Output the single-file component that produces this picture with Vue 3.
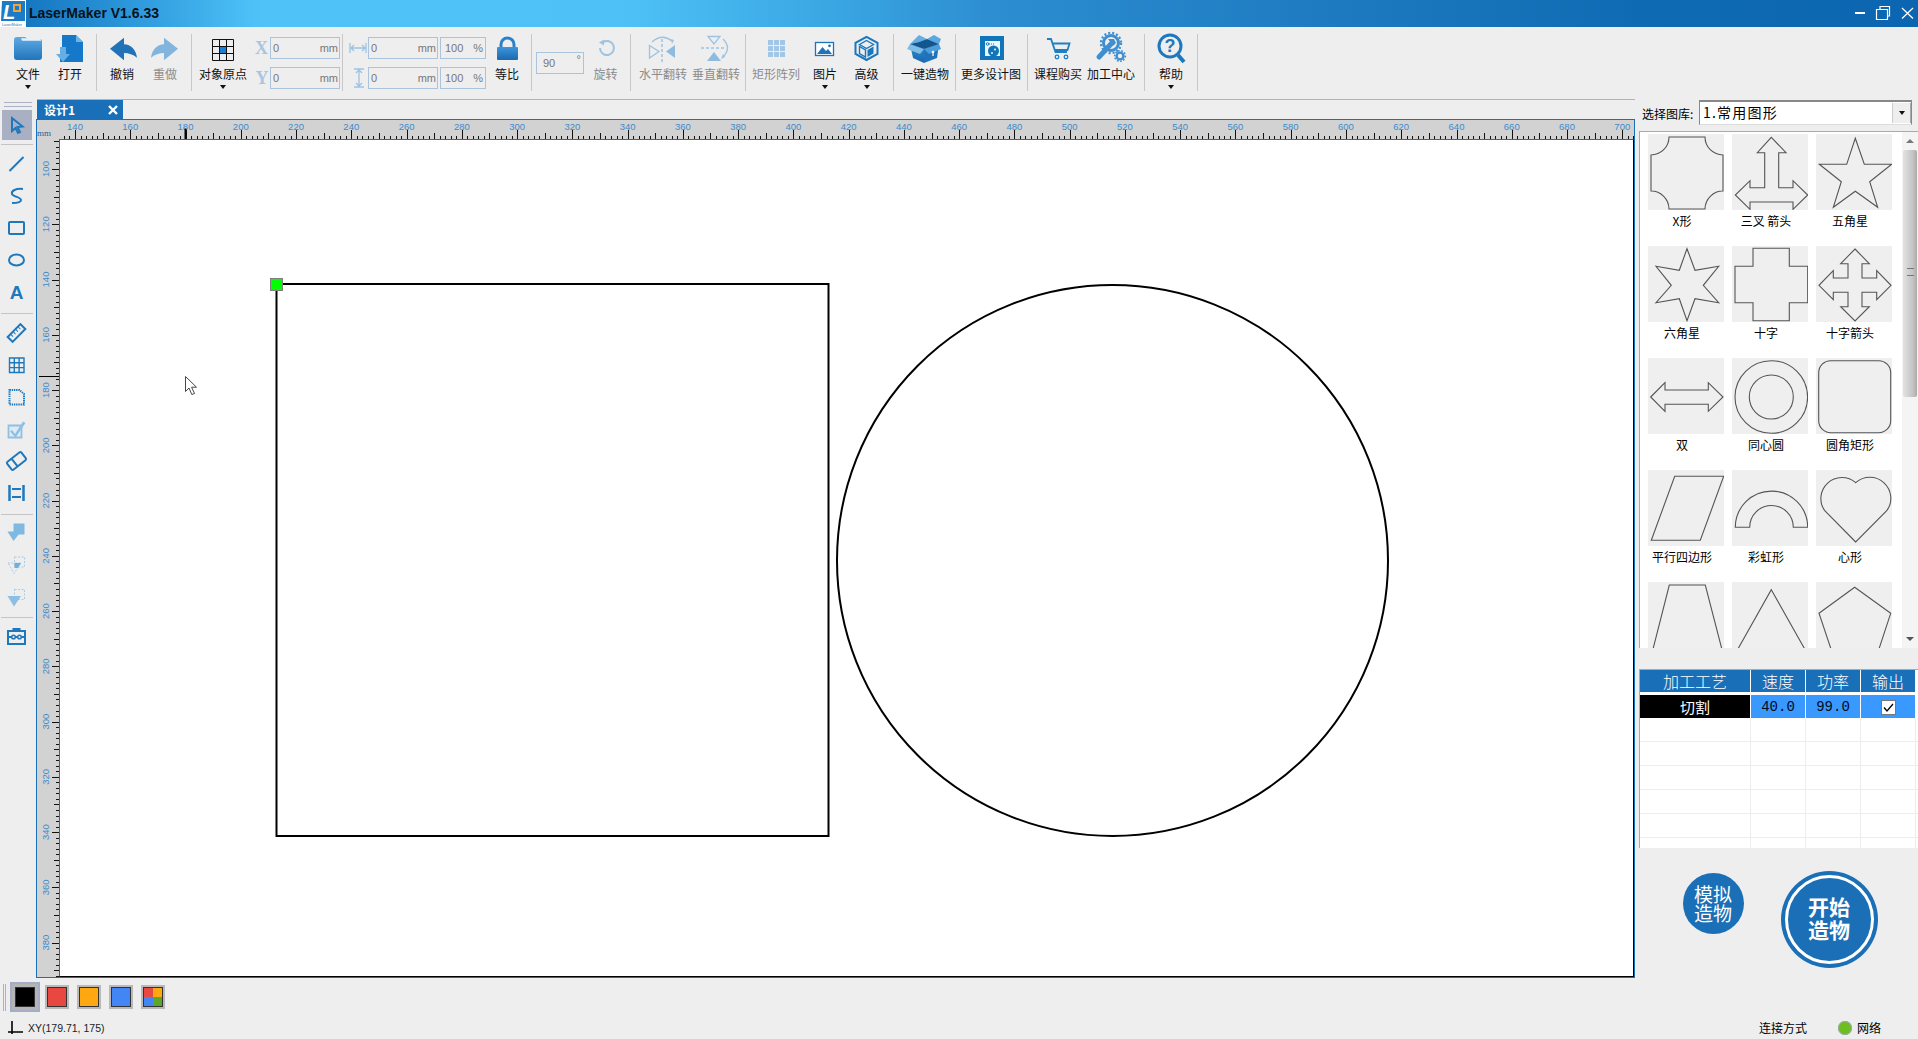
<script setup>
const L = '#9cc3e3'
const box = `<defs><linearGradient id="bx" x1="0" y1="0" x2="0" y2="1"><stop offset="0" stop-color="#2f8fd4"/><stop offset="1" stop-color="#1a66ab"/></linearGradient></defs>
<path d="M3 8 L17 13 V27 L6 22Z" fill="url(#bx)"/><path d="M17 13 L32 8 L30 22 L17 27Z" fill="#2173b9"/><path d="M3 8 L12 -1 L20 3 L12 6Z" fill="#64aee2"/><path d="M3 8 L0 13 L13 18 L17 13Z" fill="#7dbde8"/><path d="M17 13 L32 8 L34 13 L22 18Z" fill="#4c9edb"/><path d="M20 3 L27 -1 L34 3 L32 8 Z" fill="#5aa8e0"/><path d="M12 6 L20 3 L32 8 L17 13 L3 8Z" fill="#12558f"/><circle cx="26" cy="16" r="1.3" fill="#fff"/><rect x="25.4" y="16" width="1.2" height="4" fill="#fff"/>`

const icons = {
  folder: `<defs><linearGradient id="fo" x1="0" y1="0" x2="0" y2="1"><stop offset="0" stop-color="#5eaae4"/><stop offset="1" stop-color="#2275bb"/></linearGradient></defs><path d="M4 4q0-3 3-3h8l3 2h12q2 0 2 3v15q0 3-3 3H7q-3 0-3-3z" fill="url(#fo)"/><path d="M11 2.2h10l1 .8h8.5l.7 1.8H12z" fill="#e6f1fa"/>`,
  open: `<path d="M10 -1H24L31 6V26H8V14H10Z" fill="#1578c9"/><path d="M24 -1L31 6H24Z" fill="#6cb3e8"/><path d="M8 11h6v7h4l-7 8-7-8h4z" fill="#66aee4"/>`,
  undo: `<path d="M6 12.7L20 1.7V8.3C27 8.3 32 14 33 21.7C29 18.5 25 17 20 17V24.3Z" fill="#2272b8"/>`,
  redo: `<path d="M31 12.7L17 1.7V8.3C10 8.3 5 14 4 21.7C8 18.5 12 17 17 17V24.3Z" fill="#82b5de"/>`,
  origin: `<rect x="14.5" y="10.5" width="7" height="7" fill="#1a7fd6"/><path d="M7.5 3.5h21v21h-21zM14.5 3.5v21M21.5 3.5v21M7.5 10.5h21M7.5 17.5h21" fill="none" stroke="#111" stroke-width="1"/>`,
  lock: `<defs><linearGradient id="lk" x1="0" y1="0" x2="0" y2="1"><stop offset="0" stop-color="#3d95dc"/><stop offset="1" stop-color="#1c68ae"/></linearGradient></defs><path d="M12 12V8.5a6.5 6.5 0 0 1 13 0V12" fill="none" stroke="#2d80c8" stroke-width="3"/><rect x="8" y="11" width="21" height="13" rx="1" fill="url(#lk)"/>`,
  rotate: `<path d="M15 6.3A7 7 0 1 1 12 12" fill="none" stroke="${L}" stroke-width="2"/><path d="M11 6.5l5-3v6z" fill="${L}"/>`,
  fliph: `<path d="M17 3V26" stroke="${L}" stroke-width="1.5" stroke-dasharray="3 2"/><path d="M4.5 9.5L14 15.5L4.5 22Z" fill="none" stroke="${L}" stroke-width="1.3"/><path d="M30 9L21 15.5L30 22Z" fill="#8fbbdf"/><path d="M7 6Q17 -3 27 5" fill="none" stroke="${L}" stroke-width="1.3"/><path d="M27 8l-1-5 3 1z" fill="${L}"/>`,
  flipv: `<path d="M10 .5H22L16 8Z" fill="none" stroke="${L}" stroke-width="1.3"/><path d="M3 12H27" stroke="${L}" stroke-width="1.5" stroke-dasharray="3 2"/><path d="M9 25L16 16L23 25Z" fill="#8fbbdf"/><path d="M25 3Q34 12 25 21" fill="none" stroke="${L}" stroke-width="1.3"/><path d="M23 23l2-5 2 3z" fill="${L}"/>`,
  matrix: `<path d="M10 4h5v5h-5zM16 4h5v5h-5zM22 4h5v5h-5zM10 10h5v5h-5zM16 10h5v5h-5zM22 10h5v5h-5zM10 16h5v5h-5zM16 16h5v5h-5zM22 16h5v5h-5z" fill="#a2c6e4"/>`,
  image: `<rect x="8.5" y="6.5" width="18" height="13" fill="#fff" stroke="#1e73b9" stroke-width="1.3"/><path d="M10 18L15.5 11L19 15L21 13L25 18Z" fill="#2272b8"/><circle cx="22.5" cy="9.8" r="1.4" fill="#2272b8"/>`,
  adv: `<path d="M17.5.8L28.5 6.8V18L17.5 24L6.5 18V6.8Z" fill="none" stroke="#1a77bd" stroke-width="2"/><path d="M10.5 8.5L17.5 4.5L24.5 8.5L17.5 12.5Z" fill="none" stroke="#1a77bd" stroke-width="1.4"/><path d="M10.5 10.5L16.5 14V21L10.5 17.5Z" fill="none" stroke="#1a77bd" stroke-width="1.4"/><path d="M18.5 14L24.5 10.5V17.5L18.5 21Z" fill="#1a77bd"/>`,
  box,
  more: `<rect x="7" y="0" width="24" height="24" fill="#0f76bc"/><rect x="12" y="5" width="15" height="15" fill="#eef5fa"/><circle cx="20.5" cy="15" r="5.5" fill="#0f76bc"/><circle cx="14.5" cy="8" r="1.3" fill="none" stroke="#0f76bc"/><path d="M16 8h5" stroke="#0f76bc" stroke-dasharray="1 1"/><circle cx="22" cy="13.5" r=".9" fill="#fff"/><circle cx="19" cy="17" r=".9" fill="#fff"/>`,
  cart: `<path d="M7 3h4l4.5 13H27M12.5 7.5H29.5L27.5 14H15" fill="none" stroke="#1f7fc4" stroke-width="1.8"/><circle cx="17" cy="21" r="1.8" fill="none" stroke="#1f7fc4" stroke-width="1.3"/><circle cx="26" cy="21" r="1.8" fill="none" stroke="#1f7fc4" stroke-width="1.3"/>`,
  center: `<circle cx="18" cy="7" r="7.5" fill="none" stroke="#3f8fd0" stroke-width="3"/><circle cx="18" cy="7" r="10" fill="none" stroke="#3f8fd0" stroke-width="2.4" stroke-dasharray="2 2"/><path d="M18 8L6 21" stroke="#3f8fd0" stroke-width="5" stroke-linecap="round"/><path d="M15 3l6 0 2 4-3 3z" fill="#3f8fd0"/><circle cx="27" cy="20" r="3.4" fill="none" stroke="#3f8fd0" stroke-width="2.4"/><circle cx="27" cy="20" r="5.3" fill="none" stroke="#3f8fd0" stroke-width="1.6" stroke-dasharray="1.6 1.6"/>`,
  help: `<circle cx="17" cy="10" r="11" fill="none" stroke="#1d78bf" stroke-width="3"/><path d="M25 19L31 26" stroke="#1d78bf" stroke-width="4"/><text x="17" y="16" text-anchor="middle" font-size="18" font-weight="700" font-family="Liberation Sans" fill="#1d78bf">?</text>`,
}

const t = (label, icon, w, extra = {}) => ({ type: 'tool', label, icon: icons[icon], w, ...extra })
const s = (ml, mr) => ({ type: 'sep', ml, mr })
const toolbar = [
  t('文件', 'folder', 44, { arrow: true }), t('打开', 'open', 40), s(6, 4),
  t('撤销', 'undo', 42), t('重做', 'redo', 44, { dim: true }), s(4, 1),
  t('对象原点', 'origin', 60, { arrow: true }),
  { type: 'coordA' }, s(2, 2), { type: 'coordB' },
  t('等比', 'lock', 42), s(3, 4), { type: 'angle' },
  t('旋转', 'rotate', 43, { dim: true }), s(3, 3),
  t('水平翻转', 'fliph', 58, { dim: true }), t('垂直翻转', 'flipv', 48, { dim: true }), s(5, 2),
  t('矩形阵列', 'matrix', 56, { dim: true }), t('图片', 'image', 42, { arrow: true }), t('高级', 'adv', 41, { arrow: true }), s(6, 3),
  t('一键造物', 'box', 56), s(2, 0), t('更多设计图', 'more', 70), s(1, 2),
  t('课程购买', 'cart', 56), t('加工中心', 'center', 50), s(8, 0),
  t('帮助', 'help', 52, { arrow: true }), s(0, 0),
]

const C = 'fill="none" stroke="#1f77bc" stroke-width="2"'
const leftGroups = [
  [
    `<path d="M7 5V18L10.5 15L13 20L15 19L12.5 14L17.5 13.5Z" ${C}/>`,
  ],
  [
    `<path d="M5.5 19L19.5 5" ${C}/>`,
    `<path d="M19 5C12 4 7 7 8 10C9 13 17 13 17 16C17 19 12 19 8 19" ${C}/>`,
    `<rect x="5" y="6" width="15" height="12" rx="1" ${C}/>`,
    `<ellipse cx="12.5" cy="12" rx="7.5" ry="5.5" ${C}/>`,
    `<text x="12.5" y="19" text-anchor="middle" font-family="Liberation Sans" font-weight="700" font-size="19" fill="#1f77bc">A</text>`,
  ],
  [
    `<g transform="rotate(-45 12.5 12)"><rect x="3.5" y="8.5" width="18" height="7" ${C}/><path d="M7.5 9v3M11 9v3M14.5 9v3M18 9v3" stroke="#1f77bc"/></g>`,
    `<path d="M5.5 5h14.5v14.5H5.5zM10.3 5v14.5M15.1 5v14.5M5.5 9.8h14.5M5.5 14.6h14.5" fill="none" stroke="#1f77bc" stroke-width="1.4"/>`,
    `<path d="M5.5 5h10l4.5 4v10.5H5.5z" fill="none" stroke="#1f77bc" stroke-width="2" stroke-dasharray="1.4 .8"/>`,
    `<path d="M4.5 8.5h13v12h-13z" fill="#dcebf6" stroke="#8fc0e4" stroke-width="1.8"/><path d="M8 13l3 4 8-12.500 2.500 1.500-10 14.500-5.500-6z" fill="#8fc0e4"/>`,
    `<g transform="rotate(-38 12.500 12)"><rect x="3.500" y="7" width="18" height="10" rx="1.500" ${C}/><path d="M10 7v10" ${C}/></g>`,
    `<path d="M5.500 4V20M19.500 4V20" stroke="#1f77bc" stroke-width="2.500"/><path d="M8 8h9M8 16h9" stroke="#1f77bc" stroke-width="2"/>`,
  ],
  [
    `<rect x="9.500" y="3.500" width="11" height="11" fill="#7fb8e0"/><path d="M3.500 11.500H17L9.500 21Z" fill="#7fb8e0"/>`,
    `<path d="M10.500 4h10v10h-10z" fill="none" stroke="#a8cbe6" stroke-dasharray="2 1.500"/><path d="M4 10H17L10 20.500Z" fill="none" stroke="#a8cbe6" stroke-dasharray="2 1.500"/><path d="M10.500 10H17L13.700 15H10.500Z" fill="#6fafdc"/>`,
    `<path d="M10.500 3.500h10v10h-10z" fill="none" stroke="#a8cbe6" stroke-dasharray="2 1.500"/><path d="M3.500 10H17L10 20.500Z" fill="#8cbfe3"/>`,
  ],
  [
    `<path d="M4 7h17v13H4zM9.500 7V5h6v2" ${C}/><path d="M4 13h4M17 13h4M11.500 13h2" ${C}/><circle cx="9.500" cy="13" r="1.800" fill="none" stroke="#1f77bc" stroke-width="1.500"/><circle cx="15.500" cy="13" r="1.800" fill="none" stroke="#1f77bc" stroke-width="1.500"/>`,
  ],
]

const SCALE = 2.763
const topTicks = []
for (let v = 136; v <= 704; v += 2) {
  topTicks.push({ x: Math.round(15 + (v - 140) * SCALE) + 0.5, h: v % 20 === 0 ? 9 : v % 10 === 0 ? 6 : 3 })
}
const topLabels = []
for (let v = 140; v <= 700; v += 20) topLabels.push({ v, x: 15 + (v - 140) * SCALE })
const leftTicks = []
for (let v = 90; v <= 392; v += 2) {
  leftTicks.push({ y: Math.round(30 + (v - 100) * SCALE) + 0.5, w: v % 20 === 0 ? 8 : v % 10 === 0 ? 6 : 4 })
}
const leftLabels = []
for (let v = 100; v <= 380; v += 20) leftLabels.push({ v, y: 30 + (v - 100) * SCALE })

const shapes = [
  { label: 'X形', svg: '<path d="M21 3H57A18 18 0 0 0 75 21V57A18 18 0 0 0 57 75H21A18 18 0 0 0 3 57V21A18 18 0 0 0 21 3Z"/>' },
  { label: '三叉 箭头', svg: '<path d="M39.300 3.300L54 18.700H46.700V53.700H61V46.700L75.700 61L61 75.300V68H18V75.300L3.300 61L18 46.700V53.700H32.700V18.700H25.300Z"/>' },
  { label: '五角星', svg: '<path d="M39.300 4.300L48.300 30.300H75.700L53.700 47.700L61.700 73.300L39.300 57.300L17.300 73.300L25.300 47.700L3.300 30.300H30.700Z"/>' },
  { label: '六角星', svg: '<path d="M39 2.700L47 24.300L70.700 20.300L55.300 39.300L70.700 56.700L47 52.700L39 74.700L31.300 52.700L8 56.700L23.300 39.300L8 20.300L31.300 24.300Z"/>' },
  { label: '十字', svg: '<path d="M21 2.300H57.300V20.300H75.700V56.700H57.300V74.700H21V56.700H3V20.300H21Z"/>' },
  { label: '十字箭头', svg: '<path d="M39 3L53.300 17.700H46V32H60.700V24.700L75 39.300L60.700 53.700V46.300H46V60.700H53.300L39 75L24.700 60.700H32V46.300H17.300V53.700L3 39.300L17.300 24.700V32H32V17.700H24.700Z"/>' },
  { label: '双', svg: '<path d="M2.700 39L17 24.700V32H60.300V24.700L75 39L60.300 53.300V46.300H17V53.300Z"/>' },
  { label: '同心圆', svg: '<circle cx="39.300" cy="39" r="36.300"/><circle cx="39.300" cy="39" r="22"/>' },
  { label: '圆角矩形', svg: '<rect x="2.700" y="2.700" width="72" height="72" rx="12"/>' },
  { label: '平行四边形', svg: '<path d="M26.700 6.300H75.700L52.300 70.300H3.300Z"/>' },
  { label: '彩虹形', svg: '<path d="M3.300 57.300A36.200 36.200 0 0 1 75.700 57.300H61.300A21.800 21.800 0 0 0 17.700 57.300Z"/>' },
  { label: '心形', svg: '<path d="M39.700 72L9 41A21 21 0 0 1 39.700 12.700A21 21 0 0 1 70.500 41Z"/>' },
  { label: '', svg: '<path d="M21.300 3H57.300L75.900 75H3Z"/>' },
  { label: '', svg: '<path d="M39.300 7.700L75.500 72H3.100Z"/>' },
  { label: '', svg: '<path d="M38.700 5.300L74.700 31.300L61 73H17L3 31.300Z"/>' },
]

const emptyRows = [1, 2, 3, 4, 5, 6]
const swatches = ['#e8483f', '#fda811', '#4285f4']
</script>

<template>
  <div class="app">
    <header class="title">
      <svg class="logo" width="26" height="27" viewBox="0 0 26 27">
        <rect width="26" height="27" fill="#fff" />
        <path d="M2 1H25V21H1Z" fill="#1b7bc6" />
        <rect x="13" y="4" width="8" height="8" fill="#f3a33a" />
        <rect x="15" y="6" width="4" height="4" fill="#1b7bc6" />
        <text x="3" y="19" font-family="Liberation Sans" font-weight="700" font-style="italic" font-size="20" fill="#fff">L</text>
        <text x="2" y="25.500" font-family="Liberation Sans" font-size="3.800" fill="#1b7bc6">LaserMaker</text>
      </svg>
      <span class="title-text">LaserMaker V1.6.33</span>
      <div class="win">
        <svg width="64" height="27" viewBox="0 0 64 27">
          <path d="M1 13H11" stroke="#fff" stroke-width="2" />
          <path d="M22.500 9.500H33.500V19.500H22.500ZM26 9V6.500H35.500V16H34" fill="none" stroke="#fff" stroke-width="1.200" />
          <path d="M48 8L59 18.500M59 8L48 18.500" stroke="#fff" stroke-width="1.200" />
        </svg>
      </div>
    </header>

    <nav class="toolbar">
      <template v-for="(item, i) in toolbar" :key="i">
        <div v-if="item.type === 'tool'" class="tool" :class="{ dim: item.dim }" :style="{ width: item.w + 'px' }">
          <svg class="tool-icon" width="36" height="30" viewBox="0 0 36 30" v-html="item.icon"></svg>
          <span class="tool-label">{{ item.label }}</span>
          <i v-if="item.arrow" class="tri"></i>
        </div>
        <div v-else-if="item.type === 'sep'" class="sep" :style="{ marginLeft: item.ml + 'px', marginRight: item.mr + 'px' }"></div>
        <div v-else-if="item.type === 'coordA'" class="coord coord-a">
          <div class="coord-row"><span class="axis">X</span><div class="inp w70"><span>0</span><span>mm</span></div></div>
          <div class="coord-row"><span class="axis axis-y">Y</span><div class="inp w70"><span>0</span><span>mm</span></div></div>
        </div>
        <div v-else-if="item.type === 'coordB'" class="coord coord-b">
          <div class="coord-row">
            <svg class="dim-icon" width="23" height="22" viewBox="0 0 23 22"><path d="M5 6v10M21 6v10M6 11h14M9 8l-3 3 3 3M17 8l3 3-3 3" fill="none" stroke="#9cc3e3" stroke-width="1.300" /></svg>
            <div class="inp w70"><span>0</span><span>mm</span></div>
            <div class="inp w46"><span>100</span><span>%</span></div>
          </div>
          <div class="coord-row">
            <svg class="dim-icon" width="23" height="22" viewBox="0 0 23 22"><path d="M9 2h10M9 20h10M14 3v16M11 6l3-3 3 3M11 16l3 3 3-3" fill="none" stroke="#9cc3e3" stroke-width="1.300" /></svg>
            <div class="inp w70"><span>0</span><span>mm</span></div>
            <div class="inp w46"><span>100</span><span>%</span></div>
          </div>
        </div>
        <div v-else class="angle-wrap"><div class="inp angle"><span>90</span><span class="deg">°</span></div></div>
      </template>
    </nav>

    <div class="body">
      <aside class="left">
        <div class="grip"></div>
        <template v-for="(group, gi) in leftGroups" :key="gi">
          <div v-if="gi" class="left-sep" :class="'sep' + gi"></div>
          <div
            v-for="(ic, ii) in group"
            :key="ii"
            class="left-btn"
            :class="{ selected: gi === 0, compact: gi === 3 && ii > 0 }"
          >
            <svg width="25" height="24" viewBox="0 0 25 24" v-html="ic"></svg>
          </div>
        </template>
      </aside>

      <section class="center">
        <div class="tabs">
          <div class="tab"><span>设计1</span><svg width="10" height="10" viewBox="0 0 10 10"><path d="M1 1L9 9M9 1L1 9" stroke="#fff" stroke-width="2.400" /></svg></div>
        </div>
        <div class="work">
          <div class="corner">mm</div>
          <svg class="ruler-top" width="1574" height="19" viewBox="0 0 1574 19">
            <text v-for="l in topLabels" :key="l.v" :x="l.x" y="10" text-anchor="middle" class="rtext">{{ l.v }}</text>
            <path v-for="(tk, k) in topTicks" :key="k" :d="`M${tk.x} 19V${19 - tk.h}`" stroke="#111" />
            <path d="M125.500 8.500V19" stroke="#000" stroke-width="2" />
          </svg>
          <svg class="ruler-left" width="23" height="838" viewBox="0 0 23 838">
            <text
              v-for="l in leftLabels"
              :key="l.v"
              :transform="`translate(11.500 ${l.y}) rotate(-90)`"
              text-anchor="middle"
              y="0"
              class="rtext"
            >{{ l.v }}</text>
            <path v-for="(tk, k) in leftTicks" :key="k" :d="`M23 ${tk.y}H${23 - tk.w}`" stroke="#111" />
            <path d="M2 237.500H23" stroke="#000" />
          </svg>
          <div class="canvas">
            <svg class="art" width="1574" height="837" viewBox="0 0 1574 837">
              <rect x="216.500" y="144" width="552" height="552" fill="none" stroke="#000" stroke-width="2" />
              <circle cx="1052.500" cy="420.500" r="275.500" fill="none" stroke="#000" stroke-width="2" />
              <rect x="210.500" y="138.500" width="12" height="12" fill="#00ff00" stroke="#7f7f7f" />
              <path d="M125.500 236.500V251.500L129 248L131.800 254.500L134.500 253.500L131.600 247.200H136.500Z" fill="#fff" stroke="#333" stroke-width=".900" />
            </svg>
          </div>
        </div>
      </section>

      <aside class="right">
        <div class="lib-row">
          <span class="lib-label">选择图库:</span>
          <div class="select"><span class="sel-text">1.常用图形</span><b class="sel-btn"><i class="tri"></i></b></div>
        </div>
        <div class="gallery">
          <div class="grid">
            <div v-for="(sh, si) in shapes" :key="si" class="cell">
              <svg class="thumb" width="76" height="76" viewBox="0 0 76 76" fill="none" stroke="#555" stroke-width="1.100" v-html="sh.svg"></svg>
              <span v-if="sh.label" class="cell-label">{{ sh.label }}</span>
            </div>
          </div>
          <div class="scroll">
            <i class="up"></i>
            <div class="thumbbar"><em></em></div>
            <i class="down"></i>
          </div>
        </div>
        <div class="table">
          <div class="t-head">
            <span class="c1">加工工艺</span><span class="c2">速度</span><span class="c2">功率</span><span class="c2">输出</span>
          </div>
          <div class="t-sel">
            <span class="c1 black">切割</span><span class="c2 num">40.0</span><span class="c2 num">99.0</span>
            <span class="c2"><i class="check"><svg width="11" height="11" viewBox="0 0 11 11"><path d="M1 5.500L4 9L10 2" fill="none" stroke="#000" stroke-width="1.300" /></svg></i></span>
          </div>
          <div v-for="r in emptyRows" :key="r" class="t-row">
            <span class="c1"></span><span class="c2"></span><span class="c2"></span><span class="c2"></span>
          </div>
        </div>
        <div class="actions">
          <div class="sim">模拟<br />造物</div>
          <div class="start"><div class="ring">开始<br />造物</div></div>
        </div>
      </aside>
    </div>

    <footer class="bottom">
      <div class="swatches">
        <div class="sw-grip"></div>
        <div class="sw-sel"><i class="sw-inner black-sw"></i></div>
        <div v-for="c in swatches" :key="c" class="sw"><i class="sw-inner" :style="{ background: c }"></i></div>
        <div class="sw"><i class="sw-inner multi"><u class="q1"></u><u class="q2"></u><u class="q3"></u><u class="q4"></u></i></div>
      </div>
      <div class="status">
        <svg width="16" height="16" viewBox="0 0 16 16"><path d="M4 1V14M0 12H15" stroke="#000" stroke-width="1.600" fill="none" /></svg>
        <span class="xy">XY(179.71, 175)</span>
        <span class="conn">连接方式</span>
        <i class="dot"></i>
        <span class="net">网络</span>
      </div>
    </footer>
  </div>
</template>

<style>
html, body { margin: 0; padding: 0; background: #eee; overflow: hidden; }
</style>

<style scoped>
.app {
  width: 1918px;
  height: 1039px;
  display: flex;
  flex-direction: column;
  background: #eeeeee;
  font-family: "Noto Sans CJK SC", "Liberation Sans", sans-serif;
  font-size: 12px;
  color: #000;
  overflow: hidden;
}
.title {
  height: 27px;
  flex: none;
  display: flex;
  align-items: center;
  background: linear-gradient(90deg, #0f6fb9 0, #2a94d8 120px, #4fc3f8 260px, #4ec2f7 620px, #3ba8e4 820px, #2c8dd0 1000px, #1f7cc2 1300px, #0e6bb3 1650px, #0c65b0 100%);
}
.logo { flex: none; }
.title-text {
  margin-left: 3px;
  padding-bottom: 2px;
  font: 700 14px "Liberation Sans", sans-serif;
  color: #06121c;
}
.win { margin-left: auto; display: flex; }
.toolbar {
  height: 72px;
  flex: none;
  display: flex;
  align-items: stretch;
  padding-left: 6px;
}
.tool {
  position: relative;
  display: flex;
  flex-direction: column;
  align-items: center;
  flex: none;
  padding-top: 9px;
  box-sizing: border-box;
}
.tool-icon { overflow: visible; flex: none; }
.tool-label {
  line-height: 16px;
  white-space: nowrap;
  font-size: 12px;
  color: #111;
}
.dim .tool-label { color: #8c8c8c; }
.tri {
  display: block;
  width: 0;
  height: 0;
  border-left: 3px solid transparent;
  border-right: 3px solid transparent;
  border-top: 4px solid #111;
}
.tool .tri { margin-top: 3px; }
.sep {
  width: 1px;
  flex: none;
  background: #c8c8c8;
  margin-top: 7px;
  margin-bottom: 8px;
}
.coord {
  display: flex;
  flex-direction: column;
  gap: 8px;
  padding-top: 10px;
  flex: none;
}
.coord-a { width: 87px; }
.coord-b { width: 141px; }
.coord-row { display: flex; height: 22px; align-items: center; }
.axis {
  width: 17px;
  flex: none;
  text-align: center;
  font: 700 18px "Liberation Serif", serif;
  color: #a9c6e0;
}
.axis-y { padding-left: 1px; box-sizing: border-box; }
.dim-icon { flex: none; }
.inp {
  box-sizing: border-box;
  height: 22px;
  flex: none;
  display: flex;
  justify-content: space-between;
  align-items: center;
  border: 1px solid #a9c4dc;
  padding: 0 1px 0 2px;
  font: 11px "Liberation Sans", sans-serif;
  color: #777;
}
.w70 { width: 70px; }
.w46 { width: 46px; margin-left: 2px; padding: 0 2px 0 4px; }
.angle-wrap { flex: none; width: 48px; padding-top: 25px; }
.angle { width: 48px; padding: 0 2px 0 6px; }
.deg { align-self: flex-start; }

.body { height: 879px; flex: none; display: flex; }
.left { width: 36px; flex: none; display: flex; flex-direction: column; align-items: stretch; padding-top: 3px; box-sizing: border-box; }
.grip { height: 3px; margin: 0 4px 3px; border-top: 1px solid #aab2c4; border-bottom: 1px solid #aab2c4; }
.left-btn { height: 32px; display: flex; align-items: center; justify-content: center; flex: none; padding-right: 3px; }
.left-btn.compact { height: 33px; }
.left-btn.selected { height: 30px; margin: 0 4px -1px 2px; padding-right: 0; background: #a9b0c3; }
.left-sep { height: 1px; flex: none; background: #c4c4c4; margin: 5px 3px 3px 1px; }
.left-sep.sep3 { margin-bottom: 1px; }
.left-sep.sep4 { margin-top: 3px; margin-bottom: 2px; }

.center { width: 1599px; flex: none; display: flex; flex-direction: column; }
.tabs { height: 20px; flex: none; box-sizing: border-box; border-top: 1px solid #b3b3b3; margin-left: 1px; }
.tab {
  width: 86px;
  height: 19px;
  box-sizing: border-box;
  padding: 0 5px 0 7px;
  display: flex;
  align-items: center;
  justify-content: space-between;
  background: #1a6fb9;
  color: #fff;
  font-size: 12px;
  font-weight: 700;
}
.work {
  flex: 1;
  min-height: 0;
  display: grid;
  grid-template-columns: 23px 1574px;
  grid-template-rows: 19px 838px;
  border: 1px solid #1a6fb9;
  background: #d2d2d2;
  box-sizing: border-box;
}
.corner {
  font: 9px "Liberation Serif", serif;
  color: #1f5f9a;
  display: flex;
  align-items: flex-end;
  padding: 0 0 1px 0;
}
.ruler-top { display: block; }
.ruler-left { display: block; }
.rtext { font: 9.500px "Liberation Sans", sans-serif; fill: #3b8bcd; }
.canvas {
  position: relative;
  background: #fff;
  border-left: 1px solid #1a6fb9;
  border-top: 1px solid #1a6fb9;
  border-right: 1px solid #000;
  border-bottom: 1px solid #000;
  box-sizing: border-box;
  margin-left: -1px;
}
.art { position: absolute; left: 0; top: 0; overflow: hidden; }

.right { width: 283px; flex: none; display: flex; flex-direction: column; padding-left: 4px; box-sizing: border-box; }
.lib-row { height: 32px; flex: none; display: flex; padding-left: 3px; }
.lib-label { width: 57px; flex: none; padding-top: 7px; line-height: 16px; font-size: 12px; }
.select {
  width: 213px;
  height: 25px;
  margin-top: 1px;
  box-sizing: border-box;
  background: #fff;
  border: 1px solid #888;
  border-top-width: 2px;
  border-bottom-color: #ddd;
  padding-left: 3px;
  display: flex;
  justify-content: space-between;
  align-items: center;
  font-size: 14px;
  letter-spacing: 1.200px;
  line-height: 20px;
}
.sel-text { margin-top: -3px; }
.sel-btn { width: 17px; height: 20px; background: #eee; display: flex; align-items: center; justify-content: center; border-left: 1px solid #ccc; border-right: 1px solid #aaa; }
.gallery {
  height: 517px;
  flex: none;
  display: flex;
  background: #fff;
  border-top: 1px solid #aaa;
  border-left: 1px solid #aaa;
  box-sizing: border-box;
  overflow: hidden;
}
.grid {
  width: 262px;
  flex: none;
  box-sizing: border-box;
  padding: 2px 0 0 8px;
  display: grid;
  grid-template-columns: repeat(3, 76px);
  grid-auto-rows: 112px;
  column-gap: 8px;
  overflow: hidden;
}
.cell { display: flex; flex-direction: column; align-items: center; }
.thumb { background: #efefef; flex: none; display: block; }
.cell-label { line-height: 22px; padding-right: 8px; font-size: 12px; white-space: nowrap; }
.scroll { flex: 1; display: flex; flex-direction: column; align-items: center; background: #f4f4f4; position: relative; }
.up, .down { width: 0; height: 0; border-left: 4px solid transparent; border-right: 4px solid transparent; position: absolute; }
.up { top: 7px; border-bottom: 4px solid #777; }
.down { bottom: 7px; border-top: 4px solid #555; }
.thumbbar {
  margin-top: 18px;
  width: 14px;
  height: 247px;
  background: linear-gradient(90deg, #e2e2e2, #c4c4c4 70%, #aaa);
  border-radius: 2px;
  display: flex;
  align-items: center;
  justify-content: center;
}
.thumbbar em { width: 7px; height: 6px; border-top: 1px solid #777; border-bottom: 1px solid #777; position: relative; top: -2px; }
.table {
  margin-top: 21px;
  width: 279px;
  height: 179px;
  flex: none;
  box-sizing: border-box;
  overflow: hidden;
  background: #fff;
  border-top: 1px solid #aaa;
  border-left: 1px solid #aaa;
}
.t-head, .t-sel, .t-row { display: flex; }
.c1 { width: 110px; flex: none; border-right: 1px solid transparent; }
.c2 { width: 54px; flex: none; border-right: 1px solid transparent; }
.t-head span, .t-sel span { text-align: center; display: block; }
.t-head { height: 22px; margin-bottom: 3px; color: #fff; font-size: 16px; line-height: 22px; font-weight: 300; }
.t-head span { background: #1a6fb9; border-right-color: #fff; }
.t-sel { height: 23px; font-size: 15px; line-height: 23px; }
.t-sel span { background: #3a99ff; border-right-color: #fff; }
.t-sel span.black { background: #000; color: #fff; }
.num { font: 14px/24px "Liberation Mono", monospace; color: #000a1a; }
.check { display: inline-flex; width: 13px; height: 13px; background: #fff; border: 1px solid #777; vertical-align: middle; align-items: center; justify-content: center; margin-top: -3px; }
.t-row { height: 24px; box-sizing: border-box; border-bottom: 1px solid #ededed; }
.t-row span { border-right-color: #ededed; }
.actions {
  display: flex;
  align-items: flex-start;
  padding: 23px 0 0 43.500px;
  color: #fff;
}
.sim {
  width: 61px;
  height: 61px;
  margin-top: 2px;
  border-radius: 50%;
  background: #1a6fb7;
  text-align: center;
  font-size: 19px;
  line-height: 19px;
  padding-top: 11px;
  box-sizing: border-box;
}
.start {
  width: 97px;
  height: 97px;
  margin-left: 37px;
  border-radius: 50%;
  background: #1a6fb7;
  display: flex;
  align-items: center;
  justify-content: center;
}
.ring {
  width: 89px;
  height: 89px;
  box-sizing: border-box;
  border: 3px solid #fff;
  border-radius: 50%;
  text-align: center;
  font-size: 21px;
  line-height: 23px;
  font-weight: 700;
  padding-top: 17px;
}
.bottom { height: 61px; flex: none; display: flex; flex-direction: column; }
.swatches { height: 38px; flex: none; display: flex; align-items: center; box-sizing: border-box; }
.sw-grip { width: 3px; height: 27px; margin-left: 3px; border-left: 1px solid #aab2c4; border-right: 1px solid #aab2c4; box-sizing: border-box; flex: none; margin-right: 4px; }
.sw-sel { width: 30px; height: 30px; box-sizing: border-box; background: #b4b4b4; border: 2px solid #a4adc8; display: flex; align-items: center; justify-content: center; flex: none; margin-right: 5px; }
.sw { width: 24px; height: 24px; box-sizing: border-box; background: #b9b9b9; display: flex; align-items: center; justify-content: center; flex: none; margin-right: 8px; }
.sw-inner { display: block; box-sizing: border-box; width: 20px; height: 20px; border: 1px solid #333; }
.black-sw { background: #000; }
.multi { display: grid; grid-template-columns: 1fr 1fr; grid-template-rows: 1fr 1fr; }
.q1 { background: #e8483f; }
.q2 { background: #fda811; }
.q3 { background: #4285f4; }
.q4 { background: #5ea52c; }
.status { flex: 1; display: flex; align-items: center; padding: 0 37px 0 8px; box-sizing: border-box; }
.xy { margin-left: 4px; font: 10.500px "Liberation Sans", sans-serif; color: #222; }
.conn { margin-left: auto; font-size: 12px; }
.dot { width: 14px; height: 14px; margin-left: 31px; border-radius: 50%; background: #6cbf1f; box-shadow: inset 0 0 0 1px #9aa; }
.net { margin-left: 5px; font-size: 12px; }
</style>
